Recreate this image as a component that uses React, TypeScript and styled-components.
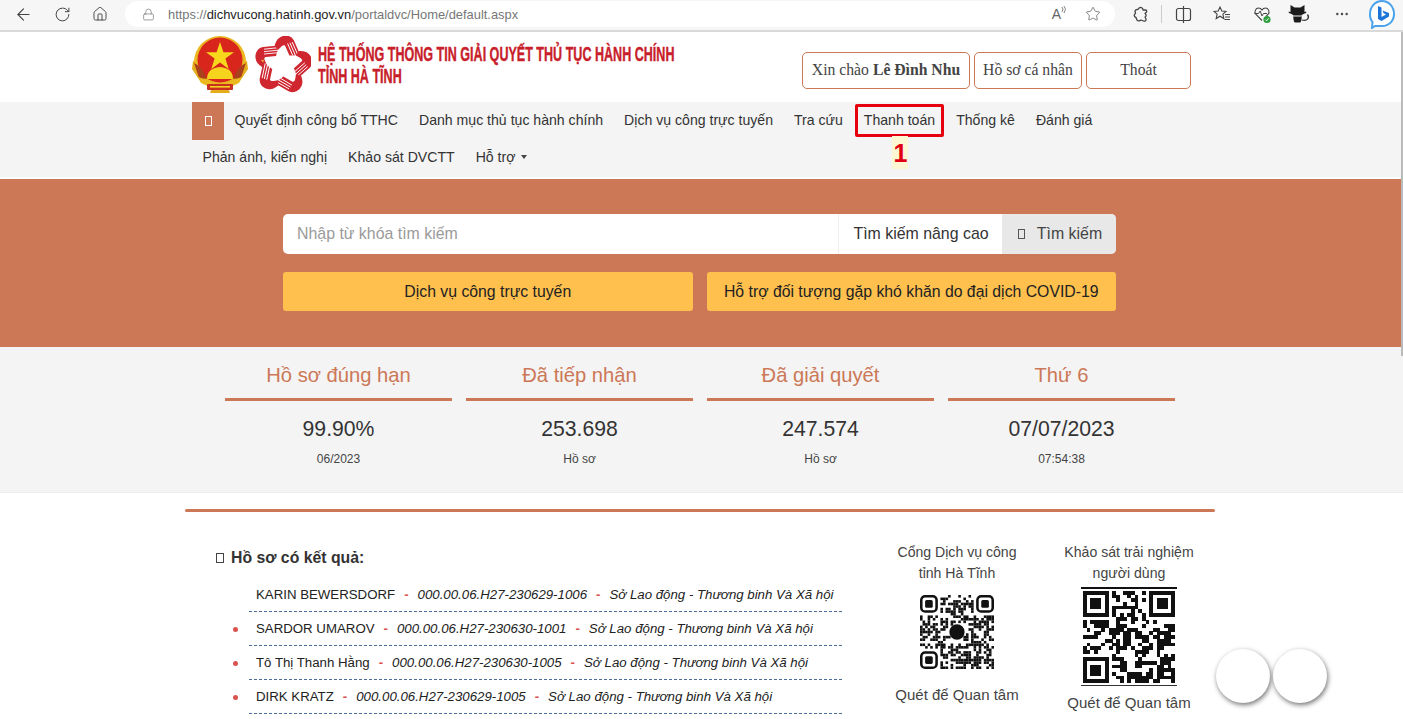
import React from "react";
import styled, { createGlobalStyle } from "styled-components";
import { ArrowLeft, RotateCw, Home, Star, MoreHorizontal, Lock } from "lucide-react";

const Global = createGlobalStyle`
  html, body { margin: 0; padding: 0; height: 719px; overflow: hidden; background: #fff; }
  * { box-sizing: border-box; }
  body { font-family: "Liberation Sans", Arial, sans-serif; color: #333; }
`;

const Page = styled.div`width: 1403px; height: 719px; overflow: hidden; position: relative;`;

/* browser chrome */
const Chrome = styled.div`
  height: 32px; background: #f6f6f6; border-bottom: 2px solid #d9d9d9;
  display: flex; align-items: center; padding: 0 0 2px 0; color: #444;
`;
const NavIcons = styled.div`display: flex; align-items: center; gap: 21px; padding-left: 14px; width: 125px; flex: none;`;
const AddressBar = styled.div`
  width: 990px; height: 26px; background: #fff; border-radius: 13px; flex: none;
  display: flex; align-items: center; padding: 0 14px 0 17px; font-size: 12.9px; color: #777;
`;
const Host = styled.span`color: #222;`;
const Url = styled.span`margin-left: 13px; flex: 1; white-space: nowrap;`;
const BarRight = styled.div`display: flex; align-items: center; gap: 18px; color: #666;`;
const ReadAloud = styled.span`font-size: 14px; color: #666; display: inline-flex; align-items: flex-start;`;
const ToolIcons = styled.div`
  display: grid; grid-template-columns: 20px 22px 22px 56px 24px 52px 32px 48px; justify-items: center; align-items: center;
  padding-left: 15px; flex: none;
`;
const Sep = styled.span`width: 1px; height: 18px; background: #ccc;`;
const Scroll = styled.div`position: absolute; right: 0; top: 32px; width: 2px; height: 324px; background: #bbb;`;

/* header */
const Header = styled.header`
  height: 70px; padding-left: 192px; display: flex; align-items: flex-start; background: #fff;
`;
const Logos = styled.div`display: flex; align-items: center; gap: 7px; height: 66px; width: 610px; flex: none;`;
const LogoMark = styled.span`flex: none; display: inline-flex;`;
const LogoText = styled.div`
  flex: none; color: #c8202a; font-weight: 700; font-size: 21px; line-height: 22px; white-space: nowrap;
  transform: scaleX(0.598); transform-origin: left center; -webkit-text-stroke: 0.4px #c8202a;
  width: 0;
`;
const Account = styled.div`display: flex; gap: 4px; padding-top: 20px;`;
const AccountBtn = styled.div<{ $w: number }>`
  width: ${p => p.$w}px; height: 37px; border: 1px solid #cc7857; border-radius: 5px; padding-bottom: 2px;
  display: flex; align-items: center; justify-content: center;
  font-family: "Liberation Serif", serif; font-size: 15.7px; color: #444; white-space: nowrap;
  b { margin-left: 4px; }
`;

/* nav */
const Nav = styled.nav`
  height: 77px; background: #f4f4f4; padding: 0 0 0 192px; border-bottom: 2px solid #fff;
`;
const NavRow = styled.div`height: 37.5px; display: flex; align-items: stretch;`;
const HomeBtn = styled.div`
  width: 32px; background: #cc7857; display: flex; align-items: center; justify-content: center;
`;
const NavItem = styled.div`
  position: relative; display: flex; align-items: center; padding: 0 10.5px 2px; font-size: 14.1px; color: #333; white-space: nowrap;
`;
const Highlight = styled.span`
  position: absolute; left: 2px; top: 2px; width: 89px; height: 33px; border: 3px solid #e6000f; border-radius: 2px;
`;
const Callout = styled.span`
  position: absolute; left: 39px; top: 34px; width: 16px; height: 33px; background: #fdf7d2; color: #e00012;
  font-family: "Liberation Sans", sans-serif; font-weight: 700; font-size: 25px; line-height: 34px; text-align: center;
`;
const Caret = styled.span`
  display: inline-block; margin-left: 6px; border-left: 3.5px solid transparent; border-right: 3.5px solid transparent; border-top: 4px solid #444;
`;
const Tofu = styled.span<{ $c?: string; $w?: number; $h?: number }>`
  display: inline-block; width: ${p => p.$w || 7}px; height: ${p => p.$h || 10}px;
  border: 1px solid ${p => p.$c || "#555"}; flex: none;
`;

/* hero */
const Hero = styled.section`
  height: 168px; background: #cc7857; display: flex; flex-direction: column; align-items: center; padding: 35px 4px 0 0; gap: 18px;
`;
const SearchBar = styled.div`
  width: 833px; height: 40px; background: #fff; border-radius: 5px; display: flex; overflow: hidden; font-size: 15.9px;
`;
const Placeholder = styled.div`flex: 1; padding-left: 14px; display: flex; align-items: center; color: #9a9a9a; border-right: 1px solid #eee;`;
const Advanced = styled.div`width: 163px; display: flex; align-items: center; justify-content: center; color: #333; padding-left: 1px;`;
const SearchBtn = styled.div`width: 114px; background: #e8e8e8; display: flex; align-items: center; justify-content: center; gap: 12px; color: #444; padding-left: 2px;`;
const Actions = styled.div`width: 833px; display: flex; gap: 14px;`;
const Action = styled.div`
  flex: 1; height: 39px; background: #ffc04d; border-radius: 3px; display: flex; align-items: center; justify-content: center; font-size: 15.8px; color: #222;
`;

/* stats */
const Stats = styled.section`
  height: 146px; background: #f4f4f4; display: flex; justify-content: flex-start; gap: 14px; padding-left: 225px; border-bottom: 1px solid #eee;
`;
const Stat = styled.div`width: 227px; text-align: center;`;
const StatTitle = styled.div`
  height: 54px; border-bottom: 3px solid #cc7857; color: #cc7857; font-size: 20.2px; line-height: 56px;
`;
const StatValue = styled.div`font-size: 21.2px; color: #333; margin-top: 14px; line-height: 28px;`;
const StatSub = styled.div`font-size: 12px; color: #444; margin-top: 9px; line-height: 14px;`;

/* lower */
const Lower = styled.section`padding: 16px 188px 0 185px;`;
const Rule = styled.div`height: 3px; background: #cc7857; border-radius: 2px;`;
const Columns = styled.div`display: flex; padding-top: 24px;`;
const Results = styled.div`width: 657px; flex: none; padding-top: 12px;`;
const ResultsTitle = styled.div`
  padding-left: 31px; font-size: 15.8px; font-weight: 700; color: #333; display: flex; align-items: center; gap: 7px; height: 20px;
`;
const ResultList = styled.ul`list-style: none; margin: 10px 0 0 64px; padding: 0;`;
const Row = styled.li<{ $bullet: boolean }>`
  position: relative; height: 34px; border-bottom: 1px dashed #4b6c96; padding-left: 7px; font-size: 13.25px; line-height: 33px; color: #222; white-space: nowrap;
  ${p => p.$bullet ? `&::before { content: ""; position: absolute; left: -16px; top: 15px; width: 5px; height: 5px; border-radius: 50%; background: #d9534f; }` : ""}
`;
const Dash = styled.span`color: #d9534f; font-weight: 700; margin: 0 9px;`;
const Em = styled.i`color: #222;`;
const QrCol = styled.div<{ $w: number; $ml: number }>`
  width: ${p => p.$w}px; margin-left: ${p => p.$ml}px; padding-top: 6px; flex: none; text-align: center; font-size: 14.1px; line-height: 20.5px; color: #444; display: flex; flex-direction: column; align-items: center;
`;
const Caption = styled.div<{ $mt: number }>`margin-top: ${p => p.$mt}px; font-size: 15px; white-space: nowrap;`;
const Lines = styled.div`white-space: nowrap;`;
const QrFrame = styled.div<{ $mt: number; $line?: boolean }>`
  margin-top: ${p => p.$mt}px; display: flex; line-height: 0;
  ${p => p.$line ? "border-top: 2px solid #111; border-bottom: 1px solid #333; padding: 2px 2px;" : ""}
`;
const Float = styled.div<{ $x: number }>`
  position: absolute; left: ${p => p.$x}px; top: 649px; width: 54px; height: 54px; border-radius: 50%; background: #fff;
  box-shadow: 1px 2px 5px rgba(0,0,0,.55);
`;

/* drawings */
function rng(seed: number) { let s = seed; return () => (s = (s * 16807) % 2147483647) / 2147483647; }

function Qr({ size, n, seed, zalo }: { size: number; n: number; seed: number; zalo?: boolean }) {
  const r = rng(seed);
  const rects: React.ReactNode[] = [];
  const inFinder = (x: number, y: number) => (x < 8 && y < 8) || (x >= n - 8 && y < 8) || (x < 8 && y >= n - 8);
  const c = (n - 1) / 2;
  for (let y = 0; y < n; y++) for (let x = 0; x < n; x++) {
    if (inFinder(x, y)) continue;
    if (zalo && Math.hypot(x - c, y - c) < 3.2) continue;
    if (r() > 0.5) rects.push(<rect key={`${x}-${y}`} x={x} y={y} width={1.02} height={1.02} />);
  }
  const finder = (x: number, y: number) => (
    <g key={`f${x}${y}`}>
      <rect x={x + .5} y={y + .5} width={6} height={6} fill="none" stroke="#111" strokeWidth={1} rx={zalo ? 1.5 : 0} />
      <rect x={x + 2} y={y + 2} width={3} height={3} rx={zalo ? .6 : 0} />
    </g>
  );
  return (
    <svg width={size} height={size} viewBox={`0 0 ${n} ${n}`} fill="#111" shapeRendering={zalo ? "auto" : "crispEdges"}>
      {rects}
      {finder(0, 0)}{finder(n - 7, 0)}{finder(0, n - 7)}
      {zalo && <circle cx={c + .5} cy={c + .5} r={3} fill="#111" />}
    </svg>
  );
}

function Emblem() {
  return (
    <svg width="56" height="60" viewBox="0 0 56 60">
      <path d="M1 26 L0 34 L6 43 L12 49 L20 53 L18 58 L38 58 L36 53 L44 49 L50 43 L56 34 L55 26 Z" fill="#e3ad1c" />
      <circle cx="28" cy="27" r="26" fill="#eab81f" />
      <circle cx="28" cy="25" r="22.5" fill="#d8261d" />
      <path d="M28 7 L31.4 17.3 L42 17.3 L33.4 23.6 L36.7 34 L28 27.6 L19.3 34 L22.6 23.6 L14 17.3 L24.6 17.3 Z" fill="#f8d81c" />
      <path d="M15 44 Q15 33 28 32 Q41 33 41 44 Z" fill="#f6d41e" />
      <path d="M2 28 Q10 31 15 44 L7 43 Z M54 28 Q46 31 41 44 L49 43 Z" fill="#a8421d" />
      <path d="M5 41 Q28 55 51 41 L47 48 Q28 58 9 48 Z" fill="#eab81f" />
      <rect x="15" y="49" width="26" height="6" rx="1" fill="#c9301f" />
      <rect x="18" y="51" width="20" height="1.6" fill="#f4d21f" />
    </svg>
  );
}

function StarLogo() {
  const hand = (
    <g>
      <path d="M0.5 22 C0 16 3 12 8 11 L24 9.5 L21 20 L11 21 C9 21 9 23 10 25 L12 29 L7 31 C3 28 1 26 0.5 22 Z" fill="#cf2630" />
      <path d="M9 13.2 L24 11.6 M9 15.6 L23 14.2 M9 18 L22 16.8" stroke="#fff" strokeWidth="0.9" fill="none" />
      <path d="M24 9.5 L26 6.5 L27 9.2 Z" fill="#efb43a" />
    </g>
  );
  return (
    <svg width="56" height="58" viewBox="0 0 56 58">
      {[0, 72, 144, 216, 288].map(a => <g key={a} transform={`rotate(${a} 28 29)`}>{hand}</g>)}
    </svg>
  );
}

function ExtensionIcon() {
  return (
    <svg width="17" height="17" viewBox="0 0 17 17" fill="none" stroke="currentColor" strokeWidth="1.3" strokeLinejoin="round">
      <path d="M7 2 C9 0.8 11 2 11 4 L13.5 4 C14.5 4 15 5 14.5 6 L13 7.5 C14.5 8.5 14.5 10.5 13 11 L14 13 C14.5 14.5 13 15.5 11.5 15 L9 14 C7.5 15.5 5 15 4.5 13 L4 11.5 C2 11 1.5 8.5 3.5 7.5 L3 5.5 C3 4 4.5 3.2 6 3.5 Z" />
    </svg>
  );
}

function SplitIcon() {
  return (
    <svg width="17" height="19" viewBox="0 0 17 19" fill="none" stroke="currentColor" strokeWidth="1.2">
      <rect x="1.5" y="3.5" width="14" height="12" rx="2" />
      <path d="M8.5 1 V18" />
    </svg>
  );
}

function FavIcon() {
  return (
    <svg width="18" height="18" viewBox="0 0 18 18" fill="none" stroke="currentColor" strokeWidth="1.1">
      <path d="M7 2 L8.8 6 L13 6.4 L9.9 9.2 L10.8 13.5 L7 11.2 L3.2 13.5 L4.1 9.2 L1 6.4 L5.2 6 Z" />
      <path d="M12 9.5 H17 M12 12 H17 M11.5 14.5 H17" />
    </svg>
  );
}

function HealthIcon() {
  return (
    <svg width="19" height="19" viewBox="0 0 19 19" fill="none">
      <path d="M9 15.5 L3 9.5 C0.5 6.5 3 3 5.5 3 C7 3 8.2 3.8 9 5 C9.8 3.8 11 3 12.5 3 C15 3 17.5 6.5 15 9.5 L13 11.5" stroke="#444" strokeWidth="1.1" />
      <path d="M1.5 8.5 H5.5 L7.2 6 L9 11 L10.5 8.5 H14" stroke="#444" strokeWidth="1" />
      <circle cx="14" cy="14.5" r="3.6" fill="#2e9e3f" />
      <path d="M12.4 14.6 L13.6 15.8 L15.7 13.4" stroke="#fff" strokeWidth="1" />
    </svg>
  );
}

function CatIcon() {
  return (
    <svg width="24" height="22" viewBox="0 0 24 22">
      <path d="M2.5 2 L6.5 4.5 H12.5 L16.5 2 V9 C16.5 11.5 13 12.5 9.5 12.5 C6 12.5 2.5 11.5 2.5 9 Z" fill="#1c1c1c" />
      <path d="M0.8 8.5 C4 9.8 15 9.8 18.2 8.5 L18.2 10 C15 11.4 4 11.4 0.8 10 Z" fill="#1c1c1c" />
      <path d="M5.5 12 C5 16 6 19.5 7 19.5 L12 19.5 C13 19.5 14 16 13.5 12 Z" fill="#1c1c1c" />
      <path d="M5.5 13 H13.5" stroke="#f6f6f6" strokeWidth="1" />
      <path d="M14 17 C19 18.5 22 15 19.5 11.5" stroke="#333" strokeWidth="1.3" fill="none" />
    </svg>
  );
}

function Bing() {
  return (
    <svg width="30" height="30" viewBox="0 0 30 30">
      <path d="M15 2 C22 2 27 8 27 15 C27 22 22 27 15 27 L8 27 L5 29 L5.5 23 C3.5 21 3 18 3 15 C3 8 8 2 15 2 Z" fill="#fff" stroke="#4aa3ea" strokeWidth="2" />
      <path d="M11 7 L14.5 8.5 V18 L19 15.5 L16.5 14 L15.5 11.5 L22 14 V17.5 L14.5 22 L11 20 Z" fill="#1b74d8" />
    </svg>
  );
}

const rows = [
  ["KARIN BEWERSDORF", "000.00.06.H27-230629-1006"],
  ["SARDOR UMAROV", "000.00.06.H27-230630-1001"],
  ["Tô Thị Thanh Hằng", "000.00.06.H27-230630-1005"],
  ["DIRK KRATZ", "000.00.06.H27-230629-1005"],
];
const stats = [
  ["Hồ sơ đúng hạn", "99.90%", "06/2023"],
  ["Đã tiếp nhận", "253.698", "Hồ sơ"],
  ["Đã giải quyết", "247.574", "Hồ sơ"],
  ["Thứ 6", "07/07/2023", "07:54:38"],
];

export default function App() {
  return (
    <Page>
      <Global />
      <Chrome>
        <NavIcons>
          <ArrowLeft size={19} strokeWidth={1.4} />
          <RotateCw size={17} strokeWidth={1.4} />
          <Home size={16} strokeWidth={1.4} />
        </NavIcons>
        <AddressBar>
          <Lock size={13} strokeWidth={1.3} />
          <Url>https://<Host>dichvucong.hatinh.gov.vn</Host>/portaldvc/Home/default.aspx</Url>
          <BarRight>
            <ReadAloud>A<svg width="6" height="9" viewBox="0 0 6 9" fill="none" stroke="currentColor" strokeWidth="0.8"><path d="M1 1 Q3 3 1 6 M3 0 Q6 3 3 7" /></svg></ReadAloud>
            <Star size={16} strokeWidth={1.2} />
          </BarRight>
        </AddressBar>
        <ToolIcons>
          <ExtensionIcon />
          <Sep />
          <SplitIcon />
          <FavIcon />
          <HealthIcon />
          <CatIcon />
          <MoreHorizontal size={16} strokeWidth={1.6} />
          <Bing />
        </ToolIcons>
      </Chrome>
      <Scroll />

      <Header>
        <Logos>
          <LogoMark><Emblem /></LogoMark>
          <LogoMark><StarLogo /></LogoMark>
          <LogoText>HỆ THỐNG THÔNG TIN GIẢI QUYẾT THỦ TỤC HÀNH CHÍNH<br />TỈNH HÀ TĨNH</LogoText>
        </Logos>
        <Account>
          <AccountBtn $w={168}>Xin chào <b>Lê Đình Nhu</b></AccountBtn>
          <AccountBtn $w={108}>Hồ sơ cá nhân</AccountBtn>
          <AccountBtn $w={105}>Thoát</AccountBtn>
        </Account>
      </Header>

      <Nav>
        <NavRow>
          <HomeBtn><Tofu $c="#fff" /></HomeBtn>
          <NavItem>Quyết định công bố TTHC</NavItem>
          <NavItem>Danh mục thủ tục hành chính</NavItem>
          <NavItem>Dịch vụ công trực tuyến</NavItem>
          <NavItem>Tra cứu</NavItem>
          <NavItem>Thanh toán<Highlight /><Callout>1</Callout></NavItem>
          <NavItem>Thống kê</NavItem>
          <NavItem>Đánh giá</NavItem>
        </NavRow>
        <NavRow>
          <NavItem>Phản ánh, kiến nghị</NavItem>
          <NavItem>Khảo sát DVCTT</NavItem>
          <NavItem>Hỗ trợ<Caret /></NavItem>
        </NavRow>
      </Nav>

      <Hero>
        <SearchBar>
          <Placeholder>Nhập từ khóa tìm kiếm</Placeholder>
          <Advanced>Tìm kiếm nâng cao</Advanced>
          <SearchBtn><Tofu />Tìm kiếm</SearchBtn>
        </SearchBar>
        <Actions>
          <Action>Dịch vụ công trực tuyến</Action>
          <Action>Hỗ trợ đối tượng gặp khó khăn do đại dịch COVID-19</Action>
        </Actions>
      </Hero>

      <Stats>
        {stats.map(s => (
          <Stat key={s[0]}>
            <StatTitle>{s[0]}</StatTitle>
            <StatValue>{s[1]}</StatValue>
            <StatSub>{s[2]}</StatSub>
          </Stat>
        ))}
      </Stats>

      <Lower>
        <Rule />
        <Columns>
          <Results>
            <ResultsTitle><Tofu $c="#444" $w={8} $h={10} />Hồ sơ có kết quả:</ResultsTitle>
            <ResultList>
              {rows.map((r, i) => (
                <Row key={r[1]} $bullet={i > 0}>
                  {r[0]}<Dash>-</Dash><Em>{r[1]}</Em><Dash>-</Dash><Em>Sở Lao động - Thương binh Và Xã hội</Em>
                </Row>
              ))}
            </ResultList>
          </Results>
          <QrCol $w={150} $ml={40}>
            <Lines>Cổng Dịch vụ công<br />tỉnh Hà Tĩnh</Lines>
            <QrFrame $mt={12}><Qr size={74} n={29} seed={1234} zalo /></QrFrame>
            <Caption $mt={16}>Quét để Quan tâm</Caption>
          </QrCol>
          <QrCol $w={150} $ml={22}>
            <Lines>Khảo sát trải nghiệm<br />người dùng</Lines>
            <QrFrame $mt={4} $line><Qr size={92} n={25} seed={98765} /></QrFrame>
            <Caption $mt={7}>Quét để Quan tâm</Caption>
          </QrCol>
        </Columns>
      </Lower>

      <Float $x={1216} />
      <Float $x={1273} />
    </Page>
  );
}
